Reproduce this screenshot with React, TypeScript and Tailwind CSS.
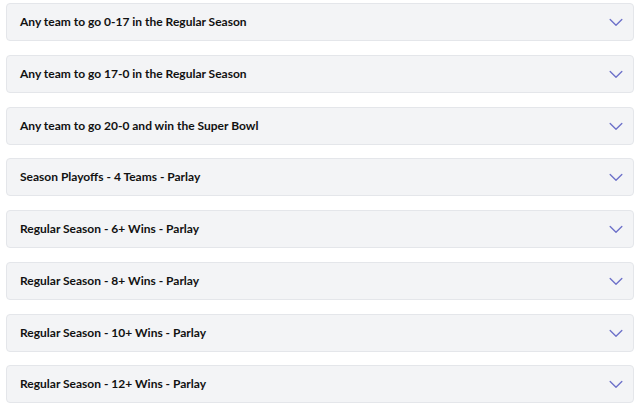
import React from "react";

const items = [
  "Any team to go 0-17 in the Regular Season",
  "Any team to go 17-0 in the Regular Season",
  "Any team to go 20-0 and win the Super Bowl",
  "Season Playoffs - 4 Teams - Parlay",
  "Regular Season - 6+ Wins - Parlay",
  "Regular Season - 8+ Wins - Parlay",
  "Regular Season - 10+ Wins - Parlay",
  "Regular Season - 12+ Wins - Parlay",
];

export default function App() {
  return (
    <div className="w-[640px] h-[411px] bg-white px-[6px] pt-[3px] flex flex-col gap-[13.75px]" style={{ fontFamily: 'Lato, sans-serif' }}>
      {items.map((t) => (
        <div key={t} className="h-[38px] shrink-0 rounded-[4px] border border-[#e4e6ea] bg-[#f3f4f6] flex items-center justify-between pl-[13px] pr-[7px]">
          <span className="text-[12px] font-bold text-[#111]">{t}</span>
          <svg width="20" height="20" viewBox="0 0 24 24" fill="none" stroke="#6c70c9" strokeWidth="1.6" strokeLinecap="round" strokeLinejoin="round">
            <path d="m5 9 7 7 7-7" />
          </svg>
        </div>
      ))}
    </div>
  );
}
